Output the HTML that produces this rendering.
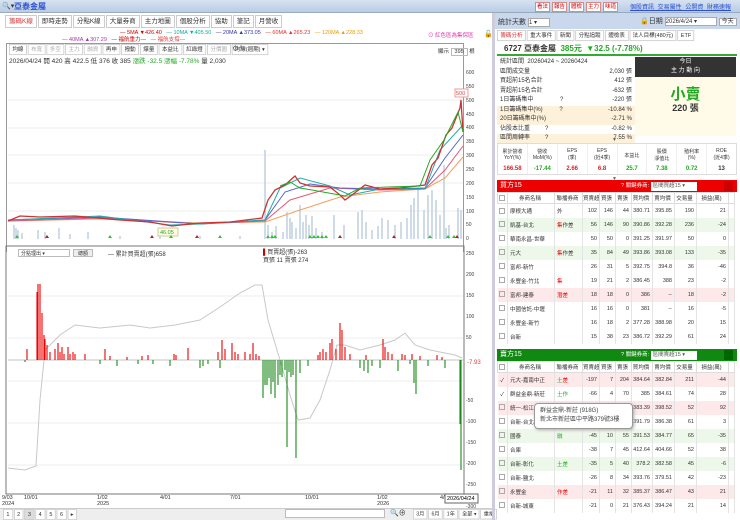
<!DOCTYPE html>
<html><head><meta charset="utf-8"><style>
*{margin:0;padding:0;box-sizing:border-box}
body{width:740px;height:520px;overflow:hidden;background:#fff;font-family:"Liberation Sans","Noto Sans CJK TC",sans-serif;font-size:7px;color:#333;position:relative}
.abs{position:absolute}
.topbar{left:0;top:0;width:740px;height:13px;background:linear-gradient(#d6e2f0,#b9cde6);border-bottom:1px solid #9ab}
.tabs span{display:inline-block;border:1px solid #ccc;padding:1px 3px;margin-right:1px;background:#fff;font-size:6.5px;line-height:9px}
.rb{display:inline-block;border:1px solid #d88;color:#c00;background:#fff;padding:0 1px;font-size:5.5px;line-height:8px;margin-right:2px}
table{border-collapse:collapse;table-layout:fixed;width:237px}
td{font-size:5.5px;height:14px;text-align:right;padding-right:2px;border-right:1px solid #e4e4e4;white-space:nowrap;overflow:hidden}
tr.h td{height:11px;text-align:center;border:1px solid #ddd;background:#fff}
td.n{text-align:left;padding-left:2px}
td.c{text-align:center;padding:0}
.pk td{background:#fde8ea}.gn td{background:#eef8ea}
.cb{display:inline-block;width:6px;height:6px;border:1px solid #aaa;vertical-align:middle}
.st div{height:9.5px;line-height:9.5px;font-size:6px;display:flex;justify-content:space-between;padding:0 3px}
.hd{position:absolute;left:497px;width:240px;height:12px;color:#fff;font-size:7px;line-height:12px;padding-left:3px;overflow:hidden}
.hd i{font-style:normal;position:absolute;left:124px;top:0;font-size:5.5px}
.hd b{font-weight:normal;background:#fff;color:#555;padding:0 2px;display:inline-block;width:46px;line-height:9px}
</style></head><body>
<div class="abs topbar"></div>
<div class="abs" style="left:2px;top:2px;font-size:7px">🔍▾</div>
<div class="abs" style="left:14px;top:1px;font-size:8px;font-weight:bold;color:#2a4fd0">亞泰金屬</div>
<div class="abs" style="left:535px;top:2px"><span class="rb">看法</span><span class="rb">報告</span><span class="rb">體檢</span><span class="rb">主力</span><span class="rb">味道</span></div>
<div class="abs" style="left:630px;top:2px;font-size:6px;color:#2a4fd0;text-decoration:underline;word-spacing:2px">個股資訊 交易屬性 公開資 財務速報</div>

<div class="abs tabs" style="left:5px;top:15px"><span style="color:#d33">籌碼K線</span><span>即時走勢</span><span>分點K線</span><span>大量券商</span><span>主力地圖</span><span>個股分析</span><span>協助</span><span>筆記</span><span>月營收</span></div>

<div class="abs" style="left:120px;top:30px;font-size:5.5px;line-height:7px;white-space:nowrap">
<span style="color:#c00">— 5MA ▼426.40</span>&nbsp;&nbsp;&nbsp;<span style="color:#1a9">— 10MA ▼405.50</span>&nbsp;&nbsp;&nbsp;<span style="color:#33a">— 20MA ▲373.05</span>&nbsp;&nbsp;&nbsp;<span style="color:#d33">— 60MA ▲265.23</span>&nbsp;&nbsp;&nbsp;<span style="color:#e90">— 120MA ▲228.33</span></div>
<div class="abs" style="left:62px;top:37px;font-size:5.5px;line-height:7px;white-space:nowrap"><span style="color:#a3a">— 40MA ▲307.29</span>&nbsp;&nbsp;&nbsp;<span style="color:#c00">— 福航重力—</span>&nbsp;&nbsp;&nbsp;<span style="color:#d44">— 福航支撐—</span></div>
<div class="abs" style="left:428px;top:31px;font-size:5.5px;color:#d3a">⊙ 紅色區為集保區</div>
<div class="abs" style="left:484px;top:30px;font-size:7px">🔓</div>

<div class="abs" style="left:6px;top:43px;width:458px;height:209px;border:1px solid #999;border-bottom:none"></div>
<div class="abs tabs" style="left:9px;top:44px;transform:scale(.85);transform-origin:0 0"><span>均線</span><span style="color:#aaa">布寬</span><span style="color:#aaa">多空</span><span style="color:#aaa">主力</span><span style="color:#aaa">融資</span><span>再申</span><span>撥動</span><span>爆量</span><span>本益比</span><span>紅綠燈</span><span style="color:#aaa">分價圖</span><span>均線(週期) ▾</span></div>
<div class="abs" style="left:232px;top:44px;font-size:8px;color:#666">⚙✎</div>
<div class="abs" style="left:438px;top:47px;font-size:5.5px">顯示 <span style="border:1px solid #bbb;padding:0 3px">395</span> 根</div>
<div class="abs" style="left:9px;top:55px;font-size:6.5px">2026/04/24 開 420 高 422.5 低 376 收 385 <span style="color:#2a2">漲跌 -32.5 漲幅 -7.78%</span> 量 2,030</div>

<svg class="abs" style="left:0;top:60px" width="495" height="460" viewBox="0 60 495 460">
<g stroke="#eee" stroke-width="1"><line x1="8" y1="100" x2="463" y2="100"/><line x1="8" y1="128" x2="463" y2="128"/><line x1="8" y1="155" x2="463" y2="155"/><line x1="8" y1="183" x2="463" y2="183"/><line x1="8" y1="211" x2="463" y2="211"/>
<line x1="8" y1="296" x2="463" y2="296"/><line x1="8" y1="338" x2="463" y2="338"/><line x1="8" y1="381" x2="463" y2="381"/><line x1="8" y1="423" x2="463" y2="423"/><line x1="8" y1="465" x2="463" y2="465"/></g>
<g stroke="#b5c8dc" stroke-width="1.3">
<path d="M14 239V225M16 239V228M18 239V230M22 239V233M38 239V230M45 239V232M59 239V228M70 239V234M88 239V232M120 239V236M160 239V235M200 239V236M240 239V236M265 239V150M268 239V225M272 239V232M276 239V226M283 239V232M287 239V212M290 239V218M292 239V222M296 239V228M300 239V205M303 239V222M306 239V215M309 239V225M312 239V216M316 239V228M322 239V232M334 239V215M344 239V225M358 239V212M362 239V210M366 239V222M372 239V230M378 239V226M382 239V218M388 239V220M395 239V225M401 239V222M407 239V218M411 239V205M414 239V198M418 239V190M424 239V210M428 239V195M432 239V190M436 239V200M440 239V215M444 239V165M446 239V228M449 239V225M458 239V208M461 239V210"/></g>
<polyline fill="none" stroke="#f0a060" stroke-width="1" points="8,221 100,219 200,223 265,222 300,210 340,197 380,192 425,189 445,178 463,157"/>
<polyline fill="none" stroke="#e35a78" stroke-width="1" points="8,221 100,218 200,224 265,221 290,200 330,188 380,190 425,189 445,170 463,146"/>
<polyline fill="none" stroke="#5566cc" stroke-width="1" points="8,220 100,217 200,224 265,220 285,192 310,184 340,188 380,189 425,188 445,158 463,135"/>
<polyline fill="none" stroke="#2aa" stroke-width="1" points="8,220 100,216 170,225 200,224 265,220 280,188 300,178 330,186 350,195 380,189 425,189 440,150 463,125"/>
<polyline fill="none" stroke="#c33" stroke-width="1.3" points="8,221 20,216 40,217 75,216 120,220 150,222 172,226 200,223 230,222 262,218 268,200 275,190 285,185 295,176 300,183 310,186 330,187 340,195 345,200 352,195 365,185 380,189 400,188 425,185 432,165 438,158 446,135 452,128 456,118 460,108 461,100 463,132"/>
<polyline fill="none" stroke="#2a2" stroke-width="1" points="280,186 290,182 300,188 312,190 345,196 360,188 420,186 430,160 444,140 458,112 463,132"/>
<rect x="158" y="228" width="20" height="8" fill="#fffbe6" stroke="#cc9"/><text x="160" y="234" font-size="5.5" fill="#2a2">46.05</text>
<rect x="455" y="89" width="13" height="8" fill="#fff" stroke="#e99"/><text x="456" y="95" font-size="5.5" fill="#d44">500</text>
<g font-size="5" fill="#444"><text x="466" y="74">600</text><text x="466" y="88">550</text><text x="466" y="102">500</text><text x="466" y="116">450</text><text x="466" y="129">400</text><text x="466" y="143">350</text><text x="466" y="157">300</text><text x="466" y="171">250</text><text x="466" y="185">200</text><text x="466" y="199">150</text><text x="466" y="213">100</text><text x="466" y="226">50</text><text x="466" y="240">0</text>
<text x="466" y="255">250</text><text x="466" y="276">200</text><text x="466" y="297">150</text><text x="466" y="318">100</text><text x="466" y="339">50</text><text x="466" y="402">-50</text><text x="466" y="423">-100</text><text x="466" y="444">-150</text><text x="466" y="465">-200</text><text x="466" y="486">-250</text><text x="466" y="508">-300</text></g>
<text x="467" y="364" font-size="6" fill="#d44">-7.93</text>
<g fill="#2c2"><path d="M15 238l2-3 2 3zM45 238l2-3 2 3zM108 238l2-3 2 3zM169 238l2-3 2 3zM218 238l2-3 2 3zM266 238l2-3 2 3zM270 238l2-3 2 3zM273 238l2-3 2 3zM308 238l2-3 2 3zM312 238l2-3 2 3zM316 238l2-3 2 3zM320 238l2-3 2 3zM324 238l2-3 2 3zM338 238l2-3 2 3zM428 238l2-3 2 3zM446 238l2-3 2 3zM452 238l2-3 2 3z"/></g>
<g fill="#b22"><path d="M45 238l2-3 2 3zM150 238l2-3 2 3zM195 238l2-3 2 3zM338 238l2-3 2 3zM392 238l2-3 2 3zM455 238l2-3 2 3z"/></g>
<line x1="6" y1="246" x2="464" y2="246" stroke="#888"/>
<rect x="6" y="246" width="458" height="248" fill="none" stroke="#777"/>
<line x1="8" y1="360" x2="463" y2="360" stroke="#888" stroke-width=".6"/>
<polyline fill="none" stroke="#c8c8c8" stroke-width="1" points="8,468 25,470 36,466 40,400 45,350 60,335 75,325 100,328 130,325 150,328 175,325 200,320 220,307 240,293 255,285 262,285 268,320 280,360 290,395 298,420 310,418 320,400 330,370 337,345 345,345 360,350 380,345 395,340 405,333 415,345 430,350 455,355 462,358"/>
<path stroke="#e00" stroke-width="1.1" d="M27 360V349M37 360V292M38 360V284M40 360V284M42 360V313M44 360V335M45 360V339M47 360V345M50 360V352M55 360V349M58 360V343M60 360V352M62 360V347M64 360V354M68 360V347M70 360V354M73 360V352M75 360V354M85 360V354M105 360V349M110 360V356M127 360V357M142 360V356M148 360V355M174 360V354M176 360V355M188 360V348M218 360V352M222 360V340M225 360V349M232 360V343M235 360V352M238 360V354M245 360V352M250 360V354M253 360V343M256 360V354M259 360V356M318 360V355M320 360V352M323 360V349M326 360V352M330 360V343M332 360V339M336 360V349M340 360V323M342 360V330M345 360V347M350 360V354M366 360V355M383 360V339M385 360V347M388 360V352M392 360V354M402 360V354M405 360V355M412 360V354M420 360V356M437 360V355M442 360V357"/>
<path stroke="#1a8a1a" stroke-width="1.1" d="M25 360V362M100 360V364M117 360V366M138 360V364M153 360V364M170 360V366M200 360V368M203 360V366M208 360V364M220 360V368M263 360V398M265 360V385M267 360V385M269 360V378M271 360V394M273 360V382M275 360V398M278 360V385M280 360V375M282 360V377M285 360V370M287 360V447M289 360V372M291 360V377M293 360V375M296 360V458M300 360V373M308 360V366M360 360V368M364 360V371M368 360V373M372 360V366M380 360V368M398 360V371M410 360V364M414 360V383M416 360V394M428 360V366M445 360V368M460 360V424M461 360V470"/>
<g font-size="5.5" fill="#333"><text x="2" y="499">9/03</text><text x="2" y="505">2024</text><text x="24" y="499">10/01</text><text x="97" y="499">1/02</text><text x="97" y="505">2025</text><text x="160" y="499">4/01</text><text x="230" y="499">7/01</text><text x="305" y="499">10/01</text><text x="377" y="499">1/02</text><text x="377" y="505">2026</text><text x="440" y="499">4/</text></g>
<rect x="445" y="494" width="33" height="9" fill="#fff" stroke="#666"/><text x="447" y="500" font-size="5.5">2026/04/24</text>
</svg>
<div class="abs" style="left:18px;top:249px;width:52px;height:8px;border:1px solid #bbb;font-size:5px;padding-left:2px">分點理出 ▾</div>
<div class="abs" style="left:73px;top:249px;width:20px;height:8px;border:1px solid #bbb;background:#eee;font-size:5px;text-align:center">總額</div>
<div class="abs" style="left:108px;top:249px;font-size:6px">— 累計買賣超(張)658</div>
<div class="abs" style="left:263px;top:249px;font-size:6px;line-height:8px"><span style="color:#c00">▌</span>買賣超(張)-263<br>買張 11 賣張 274</div>

<div class="abs" style="left:0;top:508px;width:492px;height:12px;background:#eee;border-top:1px solid #ccc"></div>
<div class="abs tabs" style="left:3px;top:509px;transform:scale(.85);transform-origin:0 0"><span>1</span><span>2</span><span style="background:#ddd">3</span><span>4</span><span>5</span><span>6</span><span>▸</span></div>
<div class="abs" style="left:285px;top:509px;width:100px;height:9px;border:1px solid #bbb;background:#fff"></div>
<div class="abs" style="left:390px;top:508px;font-size:7px">🔍⊕</div>
<div class="abs tabs" style="left:413px;top:509px;transform:scale(.8);transform-origin:0 0"><span>3月</span><span>6月</span><span>1年</span><span>全部 ▾</span><span>重播</span></div>

<div class="abs" style="left:492px;top:13px;width:3px;height:507px;background:#ccd"></div>
<div class="abs" style="left:495px;top:13px;width:245px;height:16px;background:#c9d8ec"></div>
<div class="abs" style="left:498px;top:17px;font-size:7px">統計天數 <span style="display:inline-block;width:22px;background:#fff;border:1px solid #aaa;font-size:6px">1 ▾</span></div>
<div class="abs" style="left:640px;top:16px;font-size:7px">🔒日期 <span style="display:inline-block;width:52px;background:#fff;border:1px solid #aaa;font-size:6px">2026/4/24 ▾</span> <span style="border:1px solid #aaa;background:#fff;font-size:6px;padding:0 2px">今天</span></div>
<div class="abs tabs" style="left:497px;top:30px;transform:scale(.85);transform-origin:0 0"><span style="color:#d33">籌碼分析</span><span>重大事件</span><span>新聞</span><span>分點追蹤</span><span>體檢表</span><span>法人目標(480元)</span><span>ETF</span></div>
<div class="abs" style="left:497px;top:42px;width:240px;height:14px;border-bottom:2px solid #3a3;font-size:8px;font-weight:bold;padding-left:7px;line-height:13px">6727 亞泰金屬 &nbsp;<span style="color:#2a2">385元 &nbsp;▼32.5 (-7.78%)</span></div>
<div class="abs st" style="left:497px;top:58px;width:138px">
<div><span>統計區間 &nbsp;20260424 ~ 20260424</span></div>
<div><span>區間成交量</span><span>2,030 張</span></div>
<div><span>買超前15名合計</span><span>412 張</span></div>
<div><span>賣超前15名合計</span><span>-632 張</span></div>
<div><span>1日籌碼集中 &nbsp;&nbsp;&nbsp;&nbsp;&nbsp;&nbsp;&nbsp;&nbsp;&nbsp;&nbsp;&nbsp;&nbsp;&nbsp;&nbsp;&nbsp;?</span><span>-220 張</span></div>
<div style="background:#fdf1da"><span>1日籌碼集中(%) &nbsp;&nbsp;&nbsp;&nbsp;&nbsp;&nbsp;&nbsp;&nbsp;&nbsp;?</span><span>-10.84 %</span></div>
<div style="background:#fdf1da"><span>20日籌碼集中(%)</span><span>-2.71 %</span></div>
<div><span>佔股本比重 &nbsp;&nbsp;&nbsp;&nbsp;&nbsp;&nbsp;&nbsp;&nbsp;?</span><span>-0.82 %</span></div>
<div style="background:#fdf1da"><span>區間周轉率 &nbsp;&nbsp;&nbsp;&nbsp;&nbsp;&nbsp;&nbsp;&nbsp;?</span><span>7.55 %</span></div>
</div>
<div class="abs" style="left:635px;top:57px;width:101px;height:79px;background:#fffbe8"></div>
<div class="abs" style="left:635px;top:57px;width:101px;height:20px;background:#333;color:#fff;font-size:6px;text-align:center;line-height:9px;padding-top:1px">今日<br>主 力 動 向</div>
<div class="abs" style="left:635px;top:83px;width:101px;text-align:center;font-size:15px;color:#2a2;font-weight:bold">小賣</div>
<div class="abs" style="left:635px;top:101px;width:101px;text-align:center;font-size:9px;font-weight:bold">220 張</div>
<div class="abs" style="left:612px;top:137px;font-size:5px;color:#666">▼</div>
<div class="abs" style="left:497px;top:143px;width:240px;height:32px;border:1px solid #ddd;display:flex;font-size:5px;text-align:center">
<div style="flex:1;border-right:1px solid #eee"><div style="height:22px;padding-top:4px">累計營收<br>YoY(%)</div><b style="color:#d22;font-size:6px">166.58</b></div>
<div style="flex:1;border-right:1px solid #eee"><div style="height:22px;padding-top:4px">營收<br>MoM(%)</div><b style="color:#2a2;font-size:6px">-17.44</b></div>
<div style="flex:1;border-right:1px solid #eee"><div style="height:22px;padding-top:4px">EPS<br>(季)</div><b style="color:#d22;font-size:6px">2.66</b></div>
<div style="flex:1;border-right:1px solid #eee"><div style="height:22px;padding-top:4px">EPS<br>(近4季)</div><b style="color:#d22;font-size:6px">6.8</b></div>
<div style="flex:1;border-right:1px solid #eee"><div style="height:22px;padding-top:8px">本益比</div><b style="color:#2a2;font-size:6px">25.7</b></div>
<div style="flex:1;border-right:1px solid #eee"><div style="height:22px;padding-top:4px">股價<br>淨值比</div><b style="color:#2a2;font-size:6px">7.38</b></div>
<div style="flex:1;border-right:1px solid #eee"><div style="height:22px;padding-top:4px">殖利率<br>(%)</div><b style="color:#2a2;font-size:6px">0.72</b></div>
<div style="flex:1"><div style="height:22px;padding-top:4px">ROE<br>(近4季)</div><b style="font-size:6px">13</b></div></div>
<div class="abs" style="left:612px;top:176px;font-size:5px;color:#666">▼</div>

<div class="hd" style="top:180px;background:#e00">買方15<i>? 關鍵券商: <b>區間買超15 ▾</b></i><span style="position:absolute;right:4px;top:1px;width:9px;height:10px;background:#c00"></span></div>
<table class="abs" style="left:497px;top:192px">
<colgroup><col style="width:10px"><col style="width:47px"><col style="width:28px"><col style="width:17px"><col style="width:16px"><col style="width:16px"><col style="width:21px"><col style="width:22px"><col style="width:22px"><col style="width:32px"><col style="width:6px"></colgroup>
<tr class="h"><td><span class="cb"></span></td><td>券商名稱</td><td>聯播券商</td><td>買賣超</td><td>買張</td><td>賣張</td><td>買均價</td><td>賣均價</td><td>交易量</td><td>損益(萬)</td><td></td></tr>
<tr><td class="c"><span class="cb"></span></td><td class="n">摩根大通</td><td class="n">外</td><td>102</td><td>146</td><td>44</td><td>380.71</td><td>395.85</td><td>190</td><td>21</td><td></td></tr>
<tr class="gn"><td class="c"><span class="cb"></span></td><td class="n">凱基-台北</td><td class="n"><span style="color:#e00">集</span>作差</td><td>56</td><td>146</td><td>90</td><td>390.86</td><td>392.28</td><td>236</td><td>-24</td><td></td></tr>
<tr><td class="c"><span class="cb"></span></td><td class="n">華南永昌-世華</td><td></td><td>50</td><td>50</td><td>0</td><td>391.25</td><td>391.97</td><td>50</td><td>0</td><td></td></tr>
<tr class="gn"><td class="c"><span class="cb"></span></td><td class="n">元大</td><td class="n"><span style="color:#e00">集</span>作差</td><td>35</td><td>84</td><td>49</td><td>393.86</td><td>393.08</td><td>133</td><td>-35</td><td></td></tr>
<tr><td class="c"><span class="cb"></span></td><td class="n">富邦-新竹</td><td></td><td>26</td><td>31</td><td>5</td><td>392.75</td><td>394.8</td><td>36</td><td>-46</td><td></td></tr>
<tr><td class="c"><span class="cb"></span></td><td class="n">永豐金-竹北</td><td class="n" style="color:#e00">集</td><td>19</td><td>21</td><td>2</td><td>386.45</td><td>388</td><td>23</td><td>-2</td><td></td></tr>
<tr class="pk"><td class="c"><span class="cb"></span></td><td class="n">富邦-建泰</td><td class="n" style="color:#e00">潛差</td><td>18</td><td>18</td><td>0</td><td>386</td><td>--</td><td>18</td><td>-2</td><td></td></tr>
<tr><td class="c"><span class="cb"></span></td><td class="n">中國信託-中壢</td><td></td><td>16</td><td>16</td><td>0</td><td>381</td><td>--</td><td>16</td><td>-5</td><td></td></tr>
<tr><td class="c"><span class="cb"></span></td><td class="n">永豐金-新竹</td><td></td><td>16</td><td>18</td><td>2</td><td>377.28</td><td>388.98</td><td>20</td><td>15</td><td></td></tr>
<tr><td class="c"><span class="cb"></span></td><td class="n">台新</td><td></td><td>15</td><td>38</td><td>23</td><td>386.72</td><td>392.29</td><td>61</td><td>24</td><td></td></tr>
</table>

<div class="hd" style="top:349px;background:#181">賣方15<i>? 關鍵券商: <b>區間賣超15 ▾</b></i><span style="position:absolute;right:4px;top:1px;width:9px;height:10px;background:#060"></span></div>
<table class="abs" style="left:497px;top:361px">
<colgroup><col style="width:10px"><col style="width:47px"><col style="width:28px"><col style="width:17px"><col style="width:16px"><col style="width:16px"><col style="width:21px"><col style="width:22px"><col style="width:22px"><col style="width:32px"><col style="width:6px"></colgroup>
<tr class="h"><td><span class="cb"></span></td><td>券商名稱</td><td>聯播券商</td><td>買賣超</td><td>買張</td><td>賣張</td><td>買均價</td><td>賣均價</td><td>交易量</td><td>損益(萬)</td><td></td></tr>
<tr class="pk"><td class="c">✓</td><td class="n">元大-嘉南中正</td><td class="n"><span style="color:#2a2">土</span><span style="color:#e00">差</span></td><td>-197</td><td>7</td><td>204</td><td>384.64</td><td>382.84</td><td>211</td><td>-44</td><td></td></tr>
<tr><td class="c">✓</td><td class="n">群益金鼎-新莊</td><td class="n" style="color:#2a2">土作</td><td>-66</td><td>4</td><td>70</td><td>385</td><td>384.61</td><td>74</td><td>28</td><td></td></tr>
<tr class="pk"><td class="c"><span class="cb"></span></td><td class="n">統一-松江</td><td></td><td>-48</td><td>2</td><td>50</td><td>383.39</td><td>398.52</td><td>52</td><td>92</td><td></td></tr>
<tr><td class="c"><span class="cb"></span></td><td class="n">台新-台北</td><td></td><td>-47</td><td>7</td><td>54</td><td>391.79</td><td>386.38</td><td>61</td><td>3</td><td></td></tr>
<tr class="gn"><td class="c"><span class="cb"></span></td><td class="n">國泰</td><td class="n" style="color:#2a2">融</td><td>-45</td><td>10</td><td>55</td><td>391.53</td><td>384.77</td><td>65</td><td>-35</td><td></td></tr>
<tr><td class="c"><span class="cb"></span></td><td class="n">合庫</td><td></td><td>-38</td><td>7</td><td>45</td><td>412.64</td><td>404.66</td><td>52</td><td>38</td><td></td></tr>
<tr class="gn"><td class="c"><span class="cb"></span></td><td class="n">台新-彰化</td><td class="n" style="color:#2a2">土差</td><td>-35</td><td>5</td><td>40</td><td>378.2</td><td>382.58</td><td>45</td><td>-6</td><td></td></tr>
<tr><td class="c"><span class="cb"></span></td><td class="n">台新-鹽北</td><td></td><td>-26</td><td>8</td><td>34</td><td>393.76</td><td>379.51</td><td>42</td><td>-23</td><td></td></tr>
<tr class="pk"><td class="c"><span class="cb"></span></td><td class="n">永豐金</td><td class="n"><span style="color:#e00">作差</span></td><td>-21</td><td>11</td><td>32</td><td>385.37</td><td>386.47</td><td>43</td><td>21</td><td></td></tr>
<tr><td class="c"><span class="cb"></span></td><td class="n">台新-城東</td><td></td><td>-21</td><td>0</td><td>21</td><td>376.43</td><td>394.24</td><td>21</td><td>14</td><td></td></tr>
</table>
<div class="abs" style="left:534px;top:403px;width:99px;height:26px;background:#fff;border:1px solid #999;border-radius:4px;box-shadow:1px 1px 3px #aaa;font-size:6px;line-height:9px;padding:3px 5px;color:#444">群益金鼎-新莊 (918G)<br>新北市新莊區中平路379號3樓</div>
</body></html>
